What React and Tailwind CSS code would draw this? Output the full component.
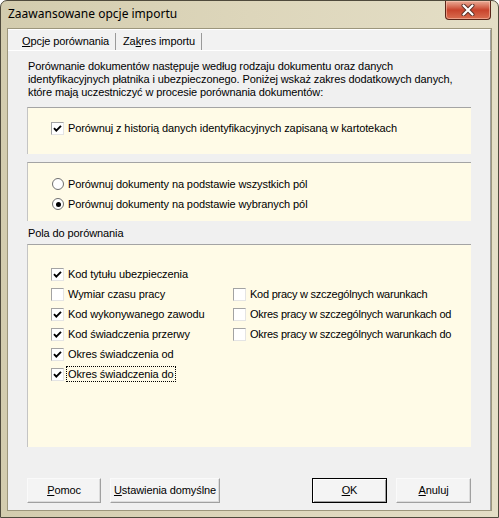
import React from 'react';

function Check({ checked }) {
  return (
    <span className="w-[13px] h-[13px] shrink-0 flex items-center justify-center bg-white border border-t-[#a3a3a3] border-l-[#a3a3a3] border-b-[#e4e4e4] border-r-[#e4e4e4]">
      {checked && (
        <svg width="9" height="9" viewBox="0 0 9 9">
          <polyline points="1,4.2 3.3,6.6 8,1.8" stroke="#000" strokeWidth="1.9" fill="none" />
        </svg>
      )}
    </span>
  );
}

function Radio({ on }) {
  return (
    <span className="w-[12px] h-[12px] shrink-0 rounded-full border border-[#6f6f6f] bg-white flex items-center justify-center">
      {on && <span className="w-[5px] h-[5px] rounded-full bg-black" />}
    </span>
  );
}

function CheckRow({ label, checked, focus }) {
  return (
    <div className="h-[20px] flex items-center">
      <Check checked={checked} />
      <span className={"ml-[3px] px-[1px] leading-[14px] " + (focus ? "outline outline-1 outline-dotted outline-black" : "")}>{label}</span>
    </div>
  );
}

function Btn({ children, main }) {
  return (
    <button
      className={
        "h-[25px] bg-[#f4f4f4] text-[11px] text-black " +
        (main
          ? "border border-black shadow-[inset_1px_1px_0_#fff,inset_-1px_-1px_0_#a0a0a0]"
          : "border border-t-[#fafafa] border-l-[#fafafa] border-b-[#a0a0a0] border-r-[#a0a0a0] shadow-[inset_-1px_-1px_0_#dcdcdc]")
      }
    >
      {children}
    </button>
  );
}

const left = [
  ['Kod tytułu ubezpieczenia', true],
  ['Wymiar czasu pracy', false],
  ['Kod wykonywanego zawodu', true],
  ['Kod świadczenia przerwy', true],
  ['Okres świadczenia od', true],
  ['Okres świadczenia do', true, true],
];

const right = [
  'Kod pracy w szczególnych warunkach',
  'Okres pracy w szczególnych warunkach od',
  'Okres pracy w szczególnych warunkach do',
];

export default function App() {
  return (
    <div className="w-[499px] h-[518px] flex flex-col rounded-t-[7px] border border-[#4f4a3c] bg-gradient-to-r from-[#d3ccae] via-[#ddd6bb] to-[#e4dec6] px-[6px] pb-[6px] font-['Liberation_Sans',Arial,sans-serif] text-[11px] tracking-[-0.1px] text-black">
      {/* title bar */}
      <div className="h-[27px] flex items-start justify-between shrink-0">
        <div className="pt-[5px] pl-[1px] text-[12px] leading-[16px] tracking-normal font-['Noto_Sans',sans-serif] text-black">Zaawansowane opcje importu</div>
        <div className="w-[46px] h-[19px] mr-[1px] rounded-b-[4px] border border-t-0 border-[#5a2519] bg-gradient-to-b from-[#e9ab97] via-[#c8432c] to-[#d96d50] flex items-center justify-center shadow-[inset_0_0_0_1px_rgba(255,210,190,0.5)]">
          <svg width="14" height="12" viewBox="0 0 14 12">
            <path d="M2.5 1.5 L11.5 10.5 M11.5 1.5 L2.5 10.5" stroke="#5a3028" strokeWidth="4" strokeLinecap="round" />
            <path d="M2.5 1.5 L11.5 10.5 M11.5 1.5 L2.5 10.5" stroke="#fff" strokeWidth="2.2" strokeLinecap="round" />
          </svg>
        </div>
      </div>

      {/* client */}
      <div className="flex-1 flex flex-col border border-[#9c967c] bg-[#f0f0f0]">
        <div className="h-[22px] shrink-0 flex items-end border-t border-t-white border-b border-b-white border-r border-r-[#a0a0a0] bg-[#f2f2f2]">
          <div className="w-[108px] h-[17px] pl-[14px] flex items-center border-r border-[#9a9a9a] leading-[13px]">
            <span><u>O</u>pcje porównania</span>
          </div>
          <div className="w-[86px] h-[17px] pl-[7px] flex items-center border-r border-[#9a9a9a] leading-[13px]">
            <span>Za<u>k</u>res importu</span>
          </div>
        </div>

        <div className="flex-1 flex flex-col px-[19px] border-r border-r-[#a0a0a0]">
          <p className="mt-[9px] pl-[1px] leading-[13px]">
            Porównanie dokumentów następuje według rodzaju dokumentu oraz danych<br />
            identyfikacyjnych płatnika i ubezpieczonego. Poniżej wskaż zakres dodatkowych danych,<br />
            które mają uczestniczyć w procesie porównania dokumentów:
          </p>

          <div className="mt-[8px] h-[47px] bg-[#fffbe7] border-t border-t-[#a4a4a4] border-l border-l-[#c4c4c4] pl-[23px] pt-[10px]">
            <CheckRow label="Porównuj z historią danych identyfikacyjnych zapisaną w kartotekach" checked />
          </div>

          <div className="mt-[8px] h-[59px] bg-[#fffbe7] border-t border-t-[#a4a4a4] border-l border-l-[#c4c4c4] pl-[24px] pt-[11px]">
            <div className="h-[20px] flex items-center gap-[4px]">
              <Radio />
              <span>Porównuj dokumenty na podstawie wszystkich pól</span>
            </div>
            <div className="h-[20px] flex items-center gap-[4px]">
              <Radio on />
              <span>Porównuj dokumenty na podstawie wybranych pól</span>
            </div>
          </div>

          <div className="mt-[6px] pl-[1px] leading-[13px]">Pola do porównania</div>

          <div className="mt-[4px] h-[203px] bg-[#fffbe7] border-t border-t-[#a4a4a4] border-l border-l-[#c4c4c4] pl-[23px] pt-[19px] flex">
            <div className="w-[182px]">
              {left.map(([l, c, f]) => (
                <CheckRow key={l} label={l} checked={c} focus={f} />
              ))}
            </div>
            <div className="pt-[20px] tracking-[-0.25px]">
              {right.map((l) => (
                <CheckRow key={l} label={l} />
              ))}
            </div>
          </div>

          <div className="mt-[31px] flex">
            <div className="w-[74px] grid"><Btn><u>P</u>omoc</Btn></div>
            <div className="w-[110px] ml-[9px] grid"><Btn><u>U</u>stawienia domyślne</Btn></div>
            <div className="w-[75px] ml-auto grid"><Btn main><u>O</u>K</Btn></div>
            <div className="w-[75px] ml-[9px] grid"><Btn><u>A</u>nuluj</Btn></div>
          </div>
        </div>
      </div>
    </div>
  );
}
